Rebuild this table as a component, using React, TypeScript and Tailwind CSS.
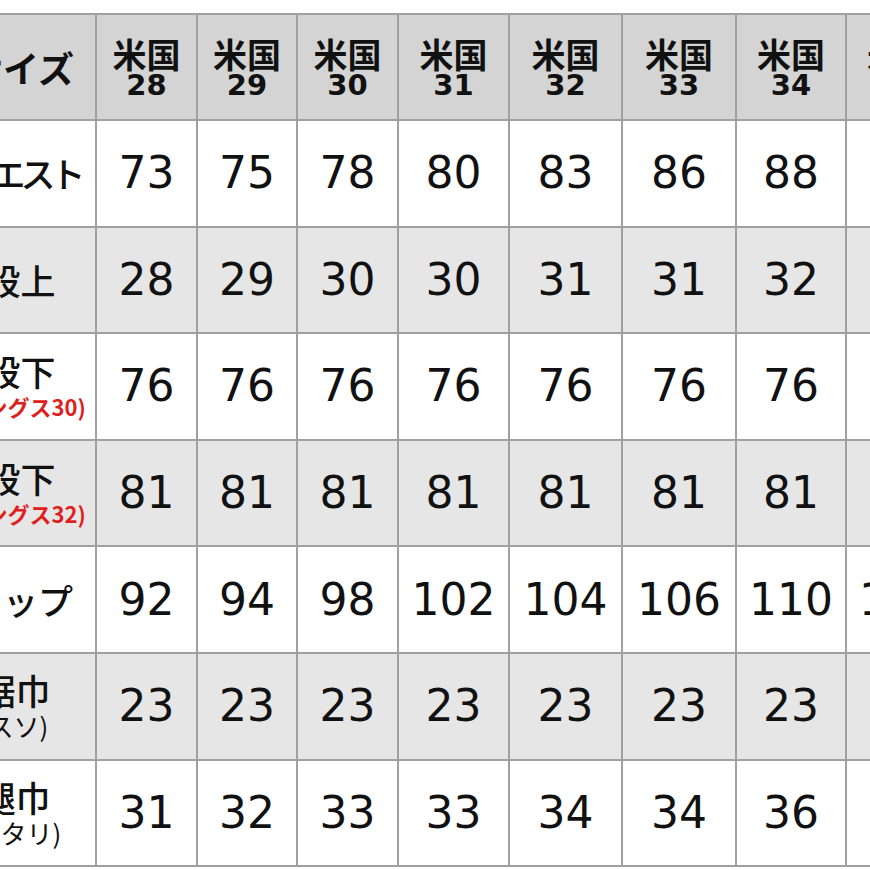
const sizes = [
  { label: "28", w: "w-[101px]" },
  { label: "29", w: "w-[100px]" },
  { label: "30", w: "w-[101px]" },
  { label: "31", w: "w-[111px]" },
  { label: "32", w: "w-[113px]" },
  { label: "33", w: "w-[114px]" },
  { label: "34", w: "w-[110px]" },
  { label: "35", w: "w-[110px]" },
];

type Row = {
  name: string;
  nameCls?: string;
  sub?: string;
  subRed?: boolean;
  values: number[];
  shaded: boolean;
};

const rows: Row[] = [
  { name: "ウエスト", nameCls: "tracking-[-5px]", values: [73, 75, 78, 80, 83, 86, 88, 91], shaded: false },
  { name: "股上", values: [28, 29, 30, 30, 31, 31, 32, 32], shaded: true },
  { name: "股下", sub: "(レングス30)", subRed: true, values: [76, 76, 76, 76, 76, 76, 76, 76], shaded: false },
  { name: "股下", sub: "(レングス32)", subRed: true, values: [81, 81, 81, 81, 81, 81, 81, 81], shaded: true },
  { name: "ヒップ", values: [92, 94, 98, 102, 104, 106, 110, 112], shaded: false },
  { name: "裾巾", nameCls: "-ml-[10px]", sub: "(スソ)", values: [23, 23, 23, 23, 23, 23, 23, 23], shaded: true },
  { name: "腿巾", nameCls: "-ml-[10px]", sub: "(ワタリ)", values: [31, 32, 33, 33, 34, 34, 36, 37], shaded: false },
];

export default function App() {
  return (
    <div className="w-[870px] h-[870px] overflow-hidden bg-white pt-[13px]">
      <table className="-ml-[56px] w-[1011px] min-w-[1011px] border-collapse table-fixed whitespace-nowrap text-[#111]">
        <colgroup>
          <col className="w-[151px]" />
          {sizes.map((s) => (
            <col key={s.label} className={s.w} />
          ))}
        </colgroup>
        <thead>
          <tr className="h-[106px] bg-[#d4d4d4]">
            <th className="border-2 border-[#a0a0a0] text-center font-['Noto_Sans_CJK_JP',sans-serif] text-[36px] font-bold">
              サイズ
            </th>
            {sizes.map((s) => (
              <th
                key={s.label}
                className="border-2 border-[#a0a0a0] text-center font-bold"
              >
                <div className="font-['Noto_Sans_CJK_JP',sans-serif] text-[34px] leading-[35px]">米国</div>
                <div className="font-['DejaVu_Sans',sans-serif] text-[29px] leading-[28px]">{s.label}</div>
              </th>
            ))}
          </tr>
        </thead>
        <tbody>
          {rows.map((r, i) => (
            <tr
              key={i}
              className={r.shaded ? "h-[106.6px] bg-[#e6e6e6]" : "h-[106.6px] bg-white"}
            >
              <td className="border-2 border-[#a0a0a0] text-center font-['Noto_Sans_CJK_JP',sans-serif]">
                <div className={`text-[35px] font-medium leading-[40px] ${r.nameCls ?? ""}`}>{r.name}</div>
                {r.sub && (
                  <div
                    className={
                      r.subRed
                        ? "text-[22px] font-bold leading-[30px] text-[#e0201c]"
                        : "-ml-[14px] text-[26px] leading-[32px]"
                    }
                  >
                    {r.sub}
                  </div>
                )}
              </td>
              {r.values.map((v, j) => (
                <td
                  key={j}
                  className="border-2 border-[#a0a0a0] text-center font-['DejaVu_Sans',sans-serif] text-[44px]"
                >
                  {v}
                </td>
              ))}
            </tr>
          ))}
        </tbody>
      </table>
    </div>
  );
}
